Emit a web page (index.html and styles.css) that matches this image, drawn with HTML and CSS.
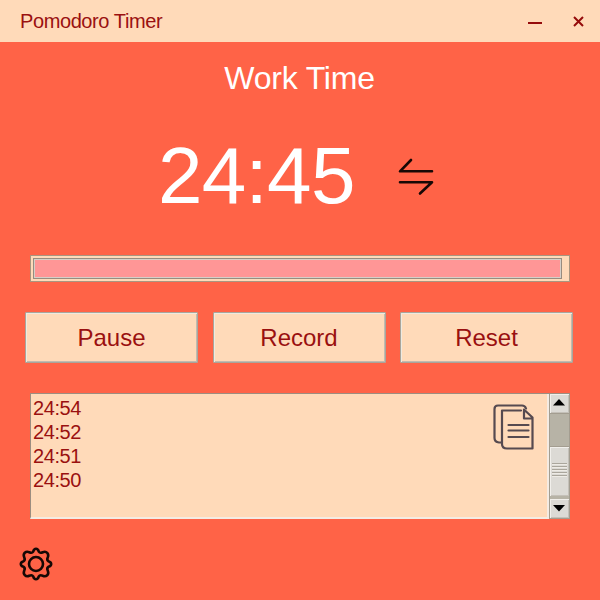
FILE: index.html
```html
<!DOCTYPE html>
<html lang="en">
<head>
<meta charset="utf-8">
<title>Pomodoro Timer</title>
<link rel="stylesheet" href="styles.css">
</head>
<body>
<div class="window">
  <header class="titlebar">
    <span class="title">Pomodoro Timer</span>
    <svg class="minimize" width="14" height="14" viewBox="0 0 14 14"><path d="M0 8h14"/></svg>
    <svg class="close" width="11" height="11" viewBox="0 0 11 11"><path d="M1 1l9 9M10 1l-9 9"/></svg>
  </header>
  <h1 class="mode">Work Time</h1>
  <div class="clock">
    <span class="time">24:45</span>
    <svg class="swap" width="36" height="38" viewBox="0 0 36 38"><path d="M13 2L2 13.3H34M2 24.3H34L22 35.5"/></svg>
  </div>
  <div class="progress"><div class="bar"></div></div>
  <div class="buttons">
    <button>Pause</button>
    <button>Record</button>
    <button>Reset</button>
  </div>
  <div class="records">
    <div class="list">
      <div>24:54</div>
      <div>24:52</div>
      <div>24:51</div>
      <div>24:50</div>
    </div>
    <svg class="copy" width="42" height="47" viewBox="0 0 42 47">
      <path d="M8.500 38.500H6Q1.500 38 1.500 34V5Q1.500 1.500 5 1.500H29Q32 1.500 33 4.500"/>
      <path d="M28 6.500H9V40Q9 44.500 14 44.500H39.500V13.500L32 6.500M31 5.500V14.500H39.500"/>
      <path d="M15.500 21H35.500M15.500 26.500H35.500M15.500 33H35.500"/>
    </svg>
    <div class="scrollbar">
      <div class="arrow"><svg width="12" height="7" viewBox="0 0 12 7"><path d="M6 0l6 6.500H0z"/></svg></div>
      <div class="trough"></div>
      <div class="thumb"><i></i><i></i><i></i><i></i><i></i></div>
      <div class="arrow"><svg width="12" height="7" viewBox="0 0 12 7"><path d="M6 6.500L0 0h12z"/></svg></div>
    </div>
  </div>
  <svg class="settings" width="34" height="34" viewBox="0 0 34 34">
    <path d="M14.2 4.600Q15 1.800 17 1.800T19.800 4.600Q21 6.500 23.800 5.200Q26.500 4 28.200 5.800T28.800 10.200Q27.500 13 29.400 14.200Q32.200 15 32.200 17T29.400 19.800Q27.500 21 28.800 23.800Q30 26.500 28.200 28.200T23.800 28.800Q21 27.500 19.800 29.400Q19 32.200 17 32.200T14.200 29.400Q13 27.500 10.200 28.800Q7.500 30 5.800 28.200T5.200 23.800Q6.500 21 4.600 19.800Q1.800 19 1.800 17T4.600 14.200Q6.500 13 5.200 10.200Q4 7.500 5.800 5.800T10.200 5.200Q13 6.500 14.200 4.600Z"/>
    <circle cx="17" cy="17" r="7"/>
  </svg>
</div>
</body>
</html>
```
FILE: styles.css
```css
* { box-sizing: border-box; }
body {
  margin: 0;
  background: #ff6347;
  font-family: "Liberation Sans", Arial, sans-serif;
  color: #9a1010;
}
svg { display: block; fill: none; }
.window {
  width: 600px;
  height: 600px;
  overflow: hidden;
  display: flex;
  flex-direction: column;
}
.titlebar {
  height: 42px;
  flex: none;
  display: flex;
  align-items: center;
  padding: 1px 16px 0 20px;
  background: #ffdab9;
}
.title { flex: 1; font-size: 20px; letter-spacing: -0.4px; }
.titlebar svg { stroke: #950b0b; stroke-width: 2; }
.minimize { margin-right: 31px; }
.mode {
  margin: 17px 0 0;
  padding-right: 1px;
  height: 38px;
  line-height: 38px;
  text-align: center;
  font-size: 32px;
  letter-spacing: -0.2px;
  font-weight: 400;
  color: #fff;
}
.clock {
  display: flex;
  align-items: center;
  height: 90px;
  margin-top: 34px;
  padding-left: 158px;
}
.time { width: 240px; font-size: 80px; line-height: 90px; letter-spacing: -0.7px; color: #fff; }
.swap { margin-top: 2px; stroke: #160805; stroke-width: 2.6; stroke-linecap: round; stroke-linejoin: round; }
.progress {
  width: 540px;
  height: 27px;
  margin: 34px 0 0 30px;
  padding: 2px;
  flex: none;
  background: #ffdab9;
  border: 1px solid #a99680;
}
.bar {
  width: 529px;
  height: 21px;
  background: #ff9696;
  border: 1px solid #988c7f;
  box-shadow: inset 0 0 0 1px #d5cfc8;
}
.buttons {
  display: grid;
  grid-template-columns: repeat(3, 173px);
  column-gap: 14.5px;
  margin: 30px 0 0 25px;
}
button {
  height: 51px;
  padding: 1px 0 0;
  font: 24px "Liberation Sans", Arial, sans-serif;
  color: inherit;
  background: #ffdab9;
  border: 1px solid #a9a59b;
  border-radius: 1px;
  box-shadow: inset 1px 1px 0 #eeeae0, inset -1px -1px 0 #c1bbb0;
}
.records {
  position: relative;
  display: flex;
  width: 540px;
  height: 126px;
  margin: 30px 0 0 30px;
  flex: none;
  background: #ffdab9;
  border: 1px solid #9c8d80;
  border-right: 0;
  border-bottom: 2px solid #f4ebe3;
}
.list {
  flex: 1;
  padding: 2px 2px;
  font-size: 20px;
  line-height: 24px;
  letter-spacing: -0.4px;
  border-right: 2px solid #f4ebe3;
}
.copy {
  position: absolute;
  left: 462px;
  top: 10px;
  stroke: #564a50;
  stroke-width: 2.2;
  stroke-linejoin: round;
  stroke-linecap: round;
}
.scrollbar {
  display: flex;
  flex-direction: column;
  width: 21px;
  height: 125px;
  background: #b7b3a6;
  border: 1px solid #a39d90;
  border-top: 0;
}
.arrow, .thumb {
  background: #dcdad5;
  box-shadow: inset 1px 1px 0 #f1efeb, inset -1px -1px 0 #c4c0b8;
}
.arrow {
  height: 19px;
  display: flex;
  align-items: center;
  justify-content: center;
  padding: 0 2px 1px 0;
}
.arrow svg { fill: #000; }
.trough { height: 34px; border: solid #a39d90; border-width: 1px 0; }
.thumb {
  height: 50px;
  margin-bottom: 3px;
  padding-bottom: 3px;
  display: flex;
  flex-direction: column;
  align-items: center;
  justify-content: center;
  gap: 2px;
}
.thumb i { width: 15px; height: 1px; background: #aaa69c; box-shadow: 0 1px 0 #eeebe5; }
.settings {
  margin: 28px 0 0 19px;
  stroke: #160805;
  stroke-width: 2.6;
}
```
